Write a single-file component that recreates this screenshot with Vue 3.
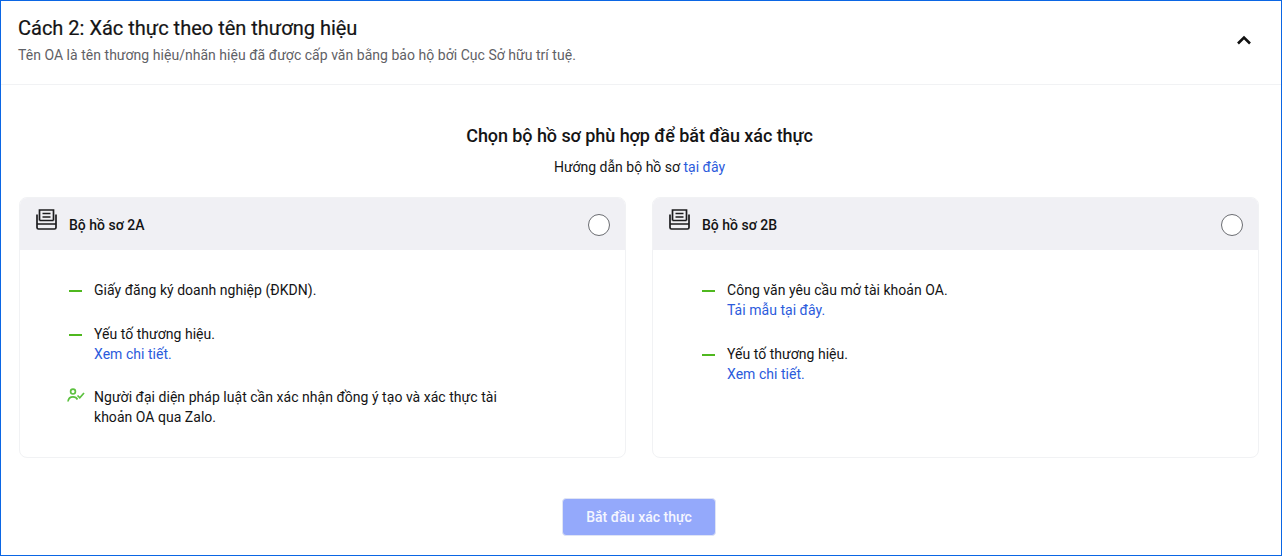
<script setup>
const packs = [
  {
    title: 'Bộ hồ sơ 2A',
    items: [
      { text: ['Giấy đăng ký doanh nghiệp (ĐKDN).'] },
      { text: ['Yếu tố thương hiệu.'], link: 'Xem chi tiết.' },
      { text: ['Người đại diện pháp luật cần xác nhận đồng ý tạo và xác thực tài', 'khoản OA qua Zalo.'], person: true },
    ],
  },
  {
    title: 'Bộ hồ sơ 2B',
    items: [
      { text: ['Công văn yêu cầu mở tài khoản OA.'], link: 'Tải mẫu tại đây.' },
      { text: ['Yếu tố thương hiệu.'], link: 'Xem chi tiết.' },
    ],
  },
]
</script>

<template>
  <div class="frame">
    <header class="head">
      <div>
        <h1>Cách 2: Xác thực theo tên thương hiệu</h1>
        <p>Tên OA là tên thương hiệu/nhãn hiệu đã được cấp văn bằng bảo hộ bởi Cục Sở hữu trí tuệ.</p>
      </div>
      <svg class="chevron" width="16" height="10" viewBox="0 0 16 10" fill="none">
        <path d="M2 8.5 L8 2.5 L14 8.5" stroke="#111" stroke-width="2.6" />
      </svg>
    </header>

    <section class="body">
      <h2>Chọn bộ hồ sơ phù hợp để bắt đầu xác thực</h2>
      <p class="guide">Hướng dẫn bộ hồ sơ <a>tại đây</a></p>

      <div class="cards">
        <div v-for="pack in packs" :key="pack.title" class="card">
          <div class="card-head">
            <svg class="doc" width="22" height="22" viewBox="0 0 22 22" fill="none" stroke="#1c1c1e" stroke-width="1.7">
              <path d="M3.5 11.5 V1 H17.5 V11.5" />
              <path d="M6.5 4.5 H14.5 M6.5 8 H14.5" />
              <path d="M1 5.5 V18.5 Q1 20 2.5 20 H18.5 Q20 20 20 18.5 V5.5" />
              <path d="M1 15 H20 M3.5 11.5 H17.5" />
            </svg>
            <span class="card-title">{{ pack.title }}</span>
            <span class="radio"></span>
          </div>
          <ul>
            <li v-for="(item, i) in pack.items" :key="i">
              <svg v-if="item.person" class="mark" width="18" height="16" viewBox="0 0 18 16" fill="none" stroke="#5cc13f" stroke-width="1.7">
                <circle cx="6" cy="3.6" r="2.4" />
                <path d="M1 13.5 C1.5 9.8 4 8.8 6 8.8 C8 8.8 9.5 9.5 10.5 11.5" />
                <path d="M10.5 7.5 L12.8 9.8 L17 5" />
              </svg>
              <span v-else class="dash"></span>
              <div>
                <div v-for="line in item.text" :key="line">{{ line }}</div>
                <a v-if="item.link">{{ item.link }}</a>
              </div>
            </li>
          </ul>
        </div>
      </div>

      <button class="start">Bắt đầu xác thực</button>
    </section>
  </div>
</template>

<style>
html, body {
  margin: 0;
  background: #fff;
}
</style>

<style scoped>
.frame {
  box-sizing: border-box;
  width: 1282px;
  height: 556px;
  border: 1px solid #0b66e4;
  font-family: Roboto, "Noto Sans", sans-serif;
  color: #141415;
  overflow: hidden;
}

.head {
  height: 84px;
  box-sizing: border-box;
  padding: 13px 29px 0 17px;
  border-bottom: 1px solid #f1f2f4;
  display: flex;
  justify-content: space-between;
  align-items: flex-start;
}

h1 {
  margin: 0;
  font-size: 20px;
  line-height: 28px;
  font-weight: 400;
  -webkit-text-stroke: 0.2px #141415;
}

.head p {
  margin: 3px 0 0;
  font-size: 14px;
  line-height: 20px;
  letter-spacing: 0.03px;
  color: #5f6166;
}

.chevron {
  margin-top: 21px;
}

.body {
  padding: 0 21px 0 18px;
  display: flex;
  flex-direction: column;
  align-items: center;
}

h2 {
  margin: 38px 0 0;
  font-size: 18px;
  line-height: 26px;
  font-weight: 500;
  letter-spacing: -0.07px;
}

.guide {
  margin: 8px 0 0;
  font-size: 14px;
  line-height: 20px;
}

a {
  color: #2b5bdc;
}

.cards {
  margin-top: 20px;
  width: 100%;
  display: grid;
  grid-template-columns: 607px 607px;
  gap: 26px;
}

.card {
  height: 261px;
  box-sizing: border-box;
  border: 1px solid #f1f2f4;
  border-radius: 8px;
  overflow: hidden;
}

.card-head {
  height: 52px;
  background: #f0f0f4;
  display: flex;
  align-items: center;
  padding: 0 15px 0 16px;
}

.doc {
  margin: -8px 11px 0 0;
}

.card-title {
  flex: 1;
  margin-top: 1px;
  font-size: 14px;
  font-weight: 500;
}

.radio {
  width: 20px;
  height: 20px;
  margin-top: 1px;
  border: 1px solid #6b6d72;
  border-radius: 50%;
  background: #fff;
}

ul {
  list-style: none;
  margin: 0;
  padding: 30px 0 0 49px;
}

li {
  display: flex;
  font-size: 14px;
  line-height: 20px;
  letter-spacing: 0.03px;
  margin-bottom: 23.5px;
}

.dash {
  flex: none;
  width: 13px;
  height: 2px;
  margin: 10px 12px 0 0;
  background: #4fb81f;
}

.mark {
  flex: none;
  margin: 1px 9px 0 -2px;
}

.start {
  margin: 40px 1px 0 0;
  width: 154px;
  height: 38px;
  border: 1px solid #dfe4f5;
  border-radius: 4px;
  background: #94a9fb;
  color: #f4f6ff;
  font-family: inherit;
  font-size: 14px;
  font-weight: 500;
}
</style>
